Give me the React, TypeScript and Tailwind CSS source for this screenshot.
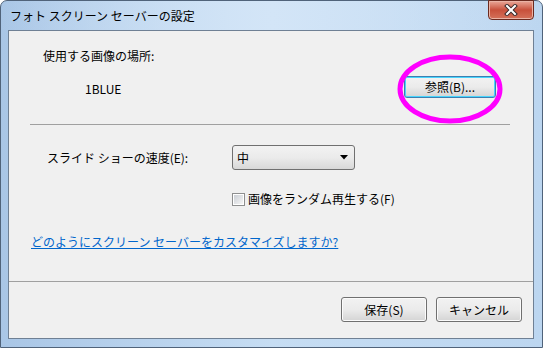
import React from 'react';

const font = { fontFamily: '"Noto Sans CJK JP", "Noto Sans", sans-serif' };

const Win7Button: React.FC<{ label: string; focused?: boolean; className?: string }> = ({ label, focused, className }) => (
  <div
    className={`flex items-center justify-center rounded-[3px] border text-[12px] text-black bg-gradient-to-b from-[#f2f2f2] via-[#ebebeb] to-[#d4d4d4] ${
      focused ? 'border-[#3c7fb1] shadow-[inset_0_0_0_1px_#48d5fd]' : 'border-[#707070] shadow-[inset_0_0_0_1px_#fbfbfb]'
    } ${className ?? ''}`}
  >
    {label}
  </div>
);

const App: React.FC = () => {
  return (
    <div className="w-[543px] h-[348px] bg-white text-black" style={font}>
      <div className="relative h-full flex flex-col rounded-t-[7px] border border-[#50637a] bg-gradient-to-r from-[#a9c6e6] via-[#c6ddf3] to-[#bcd6f0]">
        {/* Title bar */}
        <div className="h-[29px] flex items-start justify-between pl-[9px] bg-gradient-to-r from-transparent via-[#d3e5f7] to-transparent">
          <span className="mt-[6px] text-[12px] leading-[18px]">フォト スクリーン セーバーの設定</span>
          <div className="mr-[8px] -mt-px w-[46px] h-[20px] rounded-b-[4px] border border-[#6b2a1f] bg-gradient-to-b from-[#e9a799] via-[#c8503b] to-[#d4715a] flex items-center justify-center shadow-[inset_0_0_0_1px_#eab3a5]">
            <svg width="16" height="12" viewBox="0 0 16 12">
              <path d="M4 2 L12 10 M12 2 L4 10" stroke="#3a2a2a" strokeWidth="4" strokeLinecap="square" />
              <path d="M4 2 L12 10 M12 2 L4 10" stroke="#ffffff" strokeWidth="2" strokeLinecap="square" />
            </svg>
          </div>
        </div>

        {/* Client area */}
        <div className="flex-1 ml-[7px] mr-[8px] mb-[8px] border border-[#6f8094] bg-[#f0f0f0] flex flex-col">
          <div className="flex flex-col">
            <div className="pt-[17px] pl-[34px] text-[12px] leading-[16px]">使用する画像の場所:</div>
            <div className="mt-[12px] flex items-center h-[22px]">
              <span className="ml-[76px] mt-[3px] text-[12px] leading-[16px]">1BLUE</span>
              <Win7Button label="参照(B)..." focused className="ml-auto mr-[37px] w-[92px] h-[22px]" />
            </div>
            <div className="mt-[26px] ml-[21px] w-[480px] h-px bg-[#a0a0a0]" />
            <div className="mt-[20px] flex items-center h-[25px]">
              <span className="ml-[38px] text-[12px] leading-[16px]">スライド ショーの速度(E):</span>
              <div className="ml-auto mr-[178px] w-[123px] h-[25px] rounded-[3px] border border-[#707070] bg-gradient-to-b from-[#f2f2f2] via-[#ebebeb] to-[#d8d8d8] flex items-center pl-[4px] pr-[6px] text-[12px]">
                <span>中</span>
                <svg className="ml-auto" width="8" height="5" viewBox="0 0 8 5">
                  <path d="M0 0 H8 L4 4.5 Z" fill="#000" />
                </svg>
              </div>
            </div>
            <div className="mt-[21px] flex items-center h-[16px] pl-[223px]">
              <div className="w-[13px] h-[13px] border border-[#8e8f8f] bg-white flex items-center justify-center">
                <div className="w-[9px] h-[9px] bg-gradient-to-br from-[#cbcfd5] to-[#f6f6f6]" />
              </div>
              <span className="ml-[3px] text-[12px] leading-[16px]">画像をランダム再生する(F)</span>
            </div>
            <div className="mt-[27px] pl-[22px] text-[12px] leading-[16px]">
              <span className="text-[#0066cc] underline">どのようにスクリーン セーバーをカスタマイズしますか?</span>
            </div>
          </div>

          {/* Footer */}
          <div className="mt-auto h-[57px] border-t border-[#a0a0a0] flex items-start justify-end pr-[11px] pt-[15px] gap-[9px]">
            <Win7Button label="保存(S)" className="w-[86px] h-[25px]" />
            <Win7Button label="キャンセル" className="w-[86px] h-[25px]" />
          </div>
        </div>

        {/* Magenta annotation ellipse */}
        <svg className="absolute left-[396px] top-[53px] pointer-events-none" width="106" height="70" viewBox="0 0 106 70">
          <ellipse cx="53" cy="35" rx="50" ry="32" fill="none" stroke="#ff00ff" strokeWidth="5" />
        </svg>
      </div>
    </div>
  );
};

export default App;
